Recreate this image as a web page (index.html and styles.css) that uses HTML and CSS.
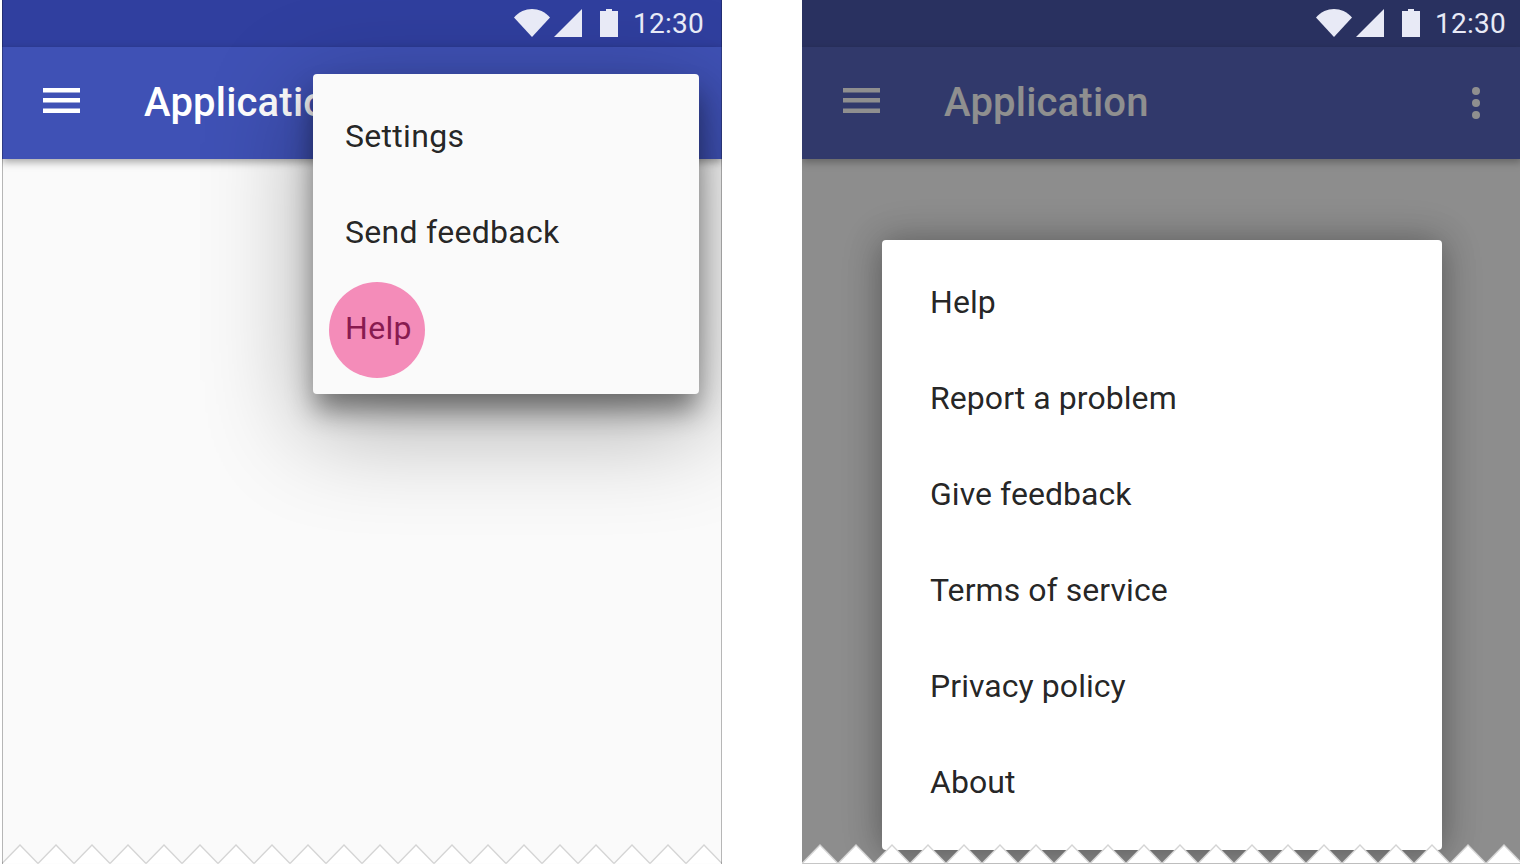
FILE: index.html
```html
<!DOCTYPE html>
<html lang="en">
<head>
    <meta charset="UTF-8">
    <meta name="viewport" content="width=device-width, initial-scale=1.0">
    <title>Menus</title>
    <link rel="stylesheet" href="styles.css">
</head>
<body>
    <svg class="defs" width="0" height="0" aria-hidden="true">
        <defs>
            <pattern id="teeth" width="36" height="20" patternUnits="userSpaceOnUse">
                <path d="M0 19.5 L18 1 L36 19.5 Z" fill="#fff"/>
                <path d="M0 19.5 L18 1 L36 19.5" fill="none" stroke="#d4d4d4" stroke-width="1.3"/>
            </pattern>
        </defs>
    </svg>

    <div class="phone phone-light">
        <div class="status-bar">
            <div class="status-icons">
                <svg class="icon-wifi" viewBox="0 0 36 28"><path d="M0 8.5 C10 -2.8 26 -2.8 36 8.5 L18 28 Z"/></svg>
                <svg class="icon-signal" viewBox="0 0 28 28"><path d="M28 0 V28 H0 Z"/></svg>
                <svg class="icon-battery" viewBox="0 0 18 28"><path d="M6 0 H12 V2 H18 V28 H0 V2 H6 Z"/></svg>
                <span class="time">12:30</span>
            </div>
        </div>
        <div class="app-bar">
            <svg class="icon-menu" viewBox="0 0 37 25"><path d="M0 0 H37 V4.5 H0 Z M0 10 H37 V14.5 H0 Z M0 20.5 H37 V25 H0 Z"/></svg>
            <span class="app-title">Application</span>
            <svg class="icon-more" viewBox="0 0 8 32"><circle cx="4" cy="4" r="4"/><circle cx="4" cy="16" r="4"/><circle cx="4" cy="28" r="4"/></svg>
        </div>
        <div class="content"></div>
        <ul class="overflow-menu">
            <li class="menu-item">Settings</li>
            <li class="menu-item">Send feedback</li>
            <li class="menu-item menu-item-touched"><span class="menu-label">Help</span></li>
        </ul>
        <svg class="torn-edge"><rect width="100%" height="100%" fill="url(#teeth)"/></svg>
    </div>

    <div class="phone phone-dim">
        <div class="status-bar">
            <div class="status-icons">
                <svg class="icon-wifi" viewBox="0 0 36 28"><path d="M0 8.5 C10 -2.8 26 -2.8 36 8.5 L18 28 Z"/></svg>
                <svg class="icon-signal" viewBox="0 0 28 28"><path d="M28 0 V28 H0 Z"/></svg>
                <svg class="icon-battery" viewBox="0 0 18 28"><path d="M6 0 H12 V2 H18 V28 H0 V2 H6 Z"/></svg>
                <span class="time">12:30</span>
            </div>
        </div>
        <div class="app-bar">
            <svg class="icon-menu" viewBox="0 0 37 25"><path d="M0 0 H37 V4.5 H0 Z M0 10 H37 V14.5 H0 Z M0 20.5 H37 V25 H0 Z"/></svg>
            <span class="app-title">Application</span>
            <svg class="icon-more" viewBox="0 0 8 32"><circle cx="4" cy="4" r="4"/><circle cx="4" cy="16" r="4"/><circle cx="4" cy="28" r="4"/></svg>
        </div>
        <div class="content"></div>
        <div class="scrim"></div>
        <ul class="dialog">
            <li class="menu-item">Help</li>
            <li class="menu-item">Report a problem</li>
            <li class="menu-item">Give feedback</li>
            <li class="menu-item">Terms of service</li>
            <li class="menu-item">Privacy policy</li>
            <li class="menu-item">About</li>
        </ul>
        <svg class="torn-edge"><rect width="100%" height="100%" fill="url(#teeth)"/></svg>
    </div>
</body>
</html>
```

FILE: styles.css
```css
html, body {
    height: 100%;
}
body {
    margin: 0;
    padding-left: 2px;
    display: flex;
    gap: 80px;
    background: #fff;
    font-family: Roboto, sans-serif;
    overflow: hidden;
}
.defs {
    position: absolute;
}
.phone {
    position: relative;
    flex: 0 0 720px;
    height: 864px;
    display: flex;
    flex-direction: column;
    overflow: hidden;
    background: #fafafa;
}
.phone-light::after {
    content: "";
    position: absolute;
    inset: 0;
    z-index: 6;
    border-left: 1px solid rgba(0, 0, 0, 0.27);
    border-right: 1px solid rgba(0, 0, 0, 0.27);
}

/* barra de estado */
.status-bar {
    flex: 0 0 47px;
    background: #303f9f;
    display: flex;
    justify-content: flex-end;
}
.status-icons {
    position: relative;
    z-index: 4;
    display: flex;
    align-items: flex-start;
    padding: 9px 18px 0 0;
    color: #e8eaf6;
}
.phone-dim .status-icons {
    padding-right: 16px;
}
.status-icons svg {
    fill: #e8eaf6;
    height: 28px;
    display: block;
}
.icon-wifi {
    width: 36px;
}
.icon-signal {
    width: 28px;
    margin-left: 4px;
}
.icon-battery {
    width: 18px;
    margin-left: 18px;
}
.time {
    margin-left: 15px;
    font-size: 28px;
    line-height: 29px;
    letter-spacing: 0.25px;
}

/* app bar */
.app-bar {
    position: relative;
    z-index: 1;
    flex: 0 0 112px;
    background: #3f51b5;
    box-shadow: 0 3px 8px rgba(0, 0, 0, 0.35);
    display: flex;
    align-items: center;
    padding: 0 42px 0 41px;
    box-sizing: border-box;
}
.icon-menu {
    width: 37px;
    height: 25px;
    fill: #fff;
    margin-top: -5px;
}
.app-title {
    margin: -2px 0 0 64px;
    color: #fff;
    font-size: 40px;
    font-weight: 500;
    letter-spacing: 0.2px;
}
.icon-more {
    width: 8px;
    height: 32px;
    fill: #fff;
    margin-left: auto;
}
.content {
    flex: 1;
}

/* menus */
.overflow-menu,
.dialog {
    list-style: none;
    margin: 0;
    position: absolute;
    box-sizing: border-box;
    border-radius: 4px;
    color: rgba(0, 0, 0, 0.87);
    font-size: 32px;
}
.overflow-menu {
    z-index: 2;
    left: 311px;
    top: 74px;
    width: 386px;
    height: 320px;
    padding: 14px 0 18px 32px;
    background: #fafafa;
    letter-spacing: 0.3px;
    box-shadow: 0 18px 28px -2px rgba(0, 0, 0, 0.46), 0 28px 100px 8px rgba(0, 0, 0, 0.3);
}
.dialog {
    z-index: 3;
    left: 80px;
    top: 240px;
    width: 560px;
    height: 610px;
    padding: 14px 0 0 48px;
    background: #fff;
    letter-spacing: 0.06px;
    box-shadow: 0 3px 32px rgba(0, 0, 0, 0.26), 0 0 44px rgba(0, 0, 0, 0.16);
}
.menu-item {
    height: 96px;
    display: flex;
    align-items: center;
}
.menu-item-touched {
    position: relative;
    color: #881b50;
}
.menu-item-touched::before {
    content: "";
    position: absolute;
    left: -16px;
    top: 2px;
    width: 96px;
    height: 96px;
    border-radius: 50%;
    background: #f48cb9;
}
.menu-label {
    position: relative;
}
.scrim {
    position: absolute;
    inset: 0;
    z-index: 2;
    background: rgba(36, 36, 36, 0.51);
}
.torn-edge {
    position: absolute;
    left: 0;
    bottom: 0;
    z-index: 5;
    width: 100%;
    height: 20px;
    display: block;
}
```
